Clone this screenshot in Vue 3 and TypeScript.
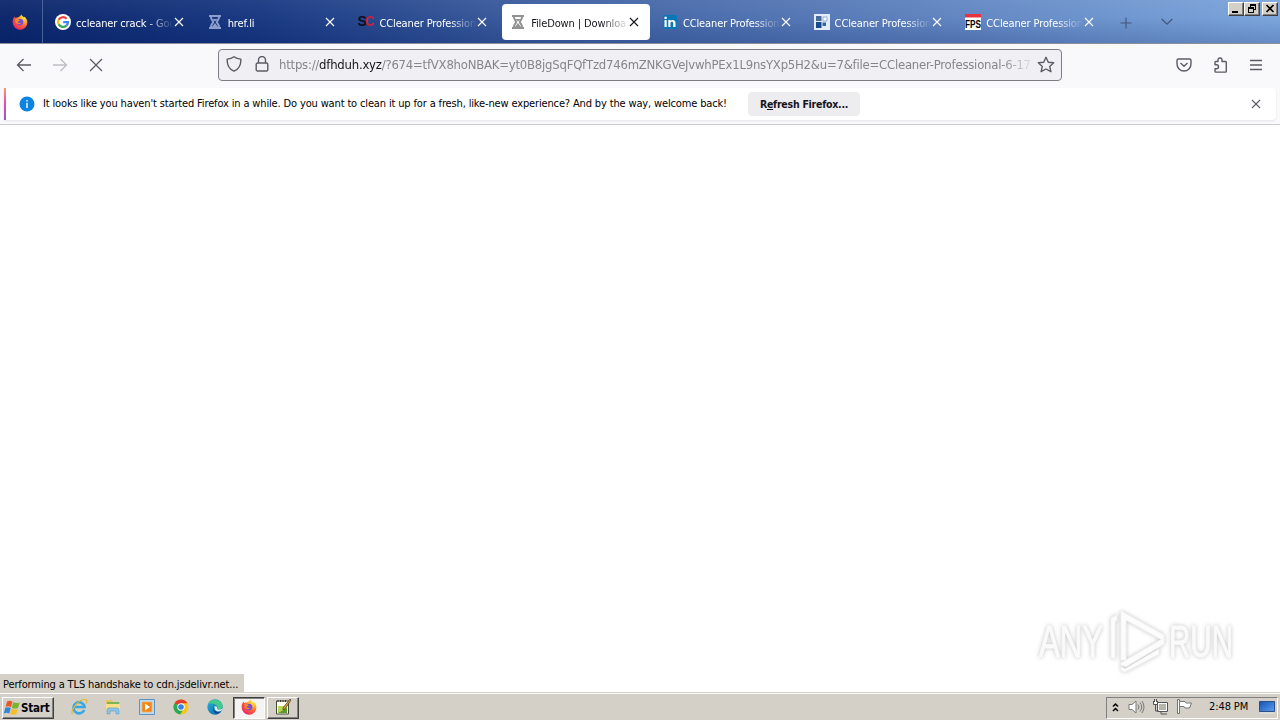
<script setup lang="ts">
interface Tab {
  title: string
  icon: 'google' | 'hourglass' | 'sc' | 'linkedin' | 'blocks' | 'fps'
  active?: boolean
}

const tabs: Tab[] = [
  { title: 'ccleaner crack - Goo', icon: 'google' },
  { title: 'href.li', icon: 'hourglass' },
  { title: 'CCleaner Profession', icon: 'sc' },
  { title: 'FileDown | Downloa', icon: 'hourglass', active: true },
  { title: 'CCleaner Profession', icon: 'linkedin' },
  { title: 'CCleaner Profession', icon: 'blocks' },
  { title: 'CCleaner Profession', icon: 'fps' },
]
</script>

<template>
  <svg class="defs" width="0" height="0" aria-hidden="true">
    <defs>
      <radialGradient id="foxFlame" cx="0.8" cy="0.15" r="0.95">
        <stop offset="0" stop-color="#fff04a" />
        <stop offset="0.35" stop-color="#ffb02b" />
        <stop offset="0.65" stop-color="#ff5a36" />
        <stop offset="1" stop-color="#e8286a" />
      </radialGradient>
      <linearGradient id="edgeBlue" x1="0" y1="0" x2="1" y2="1">
        <stop offset="0" stop-color="#2bb8d8" />
        <stop offset="1" stop-color="#0b57a8" />
      </linearGradient>
      <linearGradient id="screenBlue" x1="0" y1="0" x2="1" y2="1">
        <stop offset="0" stop-color="#1553b4" />
        <stop offset="1" stop-color="#5d9df0" />
      </linearGradient>
      <symbol id="firefox" viewBox="0 0 16 16">
        <path d="M1.200 4.800 2.600 2.600 3.400 4 5 3.500C7 3.200 8.300 2.500 9.300.3c.4 1.500 1.600 2 2.500 3l.6-.6c1.800 1.300 3 3.300 3 5.600a7.300 7.300 0 0 1-14.700.3c0-1.400 0-2.500.5-3.800z" fill="url(#foxFlame)" />
        <path d="M5 6.300c1-.4 1.800-1.400 3-1.600 2.300.2 3.500 1.600 3.400 3.600-.1 2-1.500 3.200-3.200 3.200C6.300 11.500 5 10.400 4.900 8.700z" fill="#7a4bd8" />
        <path d="M3.500 5.200c1.600-.6 2.600.2 4.300 1-.6 1-1.800.8-2.300 1.800.8 1.300 2.500 1.200 3.600.9-1 1.500-3.800 1.500-5-.2-.8-1.100-.9-2.200-.6-3.500z" fill="#ff8b2b" />
      </symbol>
      <symbol id="cross" viewBox="0 0 10 10">
        <path d="M1 1l8 8M9 1L1 9" fill="none" stroke="currentColor" stroke-width="1.100" />
      </symbol>
    </defs>
  </svg>

  <div class="screen">
    <header class="tabbar">
      <div class="pin"><svg width="16" height="16"><use href="#firefox" /></svg></div>
      <div class="tabs">
        <div v-for="(tab, i) in tabs" :key="i" class="tab" :class="{ active: tab.active }">
          <svg class="fav" width="16" height="16" viewBox="0 0 16 16">
            <g v-if="tab.icon === 'google'">
              <circle cx="8" cy="8" r="8" fill="#fff" />
              <g fill="none" stroke-width="2.200">
                <path d="M11.600 4.700A5 5 0 0 0 3.600 5.800" stroke="#ea4335" />
                <path d="M3.600 5.800a5 5 0 0 0 0 4.500" stroke="#fbbc05" />
                <path d="M3.600 10.300a5 5 0 0 0 7.800 1.300" stroke="#34a853" />
                <path d="M11.400 11.600A5 5 0 0 0 13 8.100H8.200" stroke="#4285f4" />
              </g>
            </g>
            <g v-else-if="tab.icon === 'hourglass'" class="glass" fill="none" stroke="currentColor">
              <path d="M2 2h12M2 14h12" stroke-width="2.200" />
              <path d="M4 3c0 3 2.200 3.800 2.200 5S4 10 4 13M12 3c0 3-2.200 3.800-2.200 5S12 10 12 13" stroke-width="2" />
              <path d="M5.500 5h5L8 7.500zM8 9l3 4H5z" fill="currentColor" stroke="none" />
            </g>
            <g v-else-if="tab.icon === 'sc'" class="sc">
              <text x="-0.500" y="12" fill="#0b0d20">S</text>
              <text x="7" y="12" textLength="9" lengthAdjust="spacingAndGlyphs" fill="#c3223c">C</text>
            </g>
            <g v-else-if="tab.icon === 'linkedin'">
              <rect x="1" y="1" width="14" height="14" rx="1" fill="#0a78b8" />
              <path d="M2.500 6h2.200v7H2.500zM2.500 2.800h2.200v2.200H2.500zM6.300 6h2.200v1c1-1.600 5-1.600 5 1.700V13h-2.300V9c0-1.800-2.700-1.800-2.700 0v4H6.300z" fill="#fff" />
            </g>
            <g v-else-if="tab.icon === 'blocks'">
              <path d="M0 0h16v16H0z" fill="#e3edf9" />
              <path d="M2 2h5.500v5H2z" fill="#4a6a9a" />
              <path d="M2 8h5.500v6H2z" fill="#174a91" />
              <path d="M8.500 8.500H12V12H8.500z" fill="#2c66b0" />
              <path d="M9 3h4v4H9z" fill="#fff" stroke="#8fadd6" />
            </g>
            <g v-else class="fps">
              <path d="M0 0h16v16H0z" fill="#fff" />
              <path d="M0 0h16v3.500H0z" fill="#e5343f" />
              <text x="0" y="13.500" textLength="16" lengthAdjust="spacingAndGlyphs">FPS</text>
            </g>
          </svg>
          <span class="title">{{ tab.title }}</span>
          <svg class="close" width="10" height="10"><use href="#cross" /></svg>
        </div>
      </div>
      <svg class="plus" width="12" height="12"><path d="M6 .5v11M.5 6h11" stroke="#43597f" stroke-width="1.200" /></svg>
      <svg class="chev" width="12" height="8"><path d="M.7 1 6 6.200 11.300 1" fill="none" stroke="#43597f" stroke-width="1.300" /></svg>
      <div class="wincontrols">
        <span class="wb"><svg width="14" height="12"><path d="M3 8h6v2H3z" /></svg></span>
        <span class="wb"><svg width="14" height="12"><path d="M5 1h6v6H9V6h1V3H6v1H5zM3 4h6v6H3zM4 6v3h4V6z" fill-rule="evenodd" /></svg></span>
        <span class="wb last"><svg width="14" height="12"><path d="M3.500 2l7 7M10.500 2l-7 7" stroke="#000" stroke-width="1.700" /></svg></span>
      </div>
    </header>

    <nav class="navbar">
      <svg class="nav back" width="16" height="16"><path d="M15 8H1.500M7.500 2l-6 6 6 6" /></svg>
      <svg class="nav fwd" width="16" height="16"><path d="M1 8h13.500M8.500 2l6 6-6 6" /></svg>
      <svg class="nav stop" width="14" height="14"><path d="M1 1l12 12M13 1 1 13" /></svg>
      <div class="urlbar">
        <svg class="ui shield" width="16" height="16"><path d="M8 .8c2 1.500 4.300 2.100 6.800 2.300.3 5.500-1.600 9.900-6.800 12.100C2.800 13 .9 8.600 1.200 3.100 3.700 2.900 6 2.300 8 .8z" /></svg>
        <svg class="ui lock" width="14" height="16"><path d="M3.500 7V4a3.500 3.500 0 0 1 7 0v3M2.500 7h9a1.300 1.300 0 0 1 1.300 1.300v5.400a1.300 1.300 0 0 1-1.300 1.300h-9a1.300 1.300 0 0 1-1.300-1.300V8.300A1.300 1.300 0 0 1 2.500 7z" /></svg>
        <div class="url">https://<b>dfhduh.xyz</b>/?674=tfVX8hoNBAK=yt0B8jgSqFQfTzd746mZNKGVeJvwhPEx1L9nsYXp5H2&amp;u=7&amp;file=CCleaner-Professional-6-17</div>
        <svg class="ui star" width="18" height="17"><path d="M9 1.300l2.300 4.900 5.400.6-4 3.600 1.200 5.300L9 13l-4.900 2.700 1.200-5.300-4-3.600 5.400-.6z" /></svg>
      </div>
      <div class="actions">
        <svg class="ui" width="16" height="16"><path d="M2.500 2h11A1.500 1.500 0 0 1 15 3.500V7A7 7 0 0 1 1 7V3.500A1.500 1.500 0 0 1 2.500 2zM4.500 6 8 9.300 11.500 6" /></svg>
        <svg class="ui" width="16" height="16"><path d="M5 4.500V3a2 2 0 0 1 4 0v1.500h3.500a.8.8 0 0 1 .8.8v9a.8.8 0 0 1-.8.8H2.800a.8.8 0 0 1-.8-.8V11.800H3.500a2 2 0 0 0 0-4H2V5.300a.8.8 0 0 1 .8-.8z" /></svg>
        <svg class="ui" width="14" height="16"><path d="M1 3.500h12M1 8h12M1 12.500h12" /></svg>
      </div>
    </nav>

    <div class="notice-wrap">
      <div class="notice">
        <svg class="info" width="16" height="16"><circle cx="8" cy="8" r="7.500" fill="#0a84e0" /><path d="M7.300 4h1.400v1.400H7.300zM7.300 6.700h1.400V12H7.300z" fill="#fff" /></svg>
        <span class="msg">It looks like you haven't started Firefox in a while. Do you want to clean it up for a fresh, like-new experience? And by the way, welcome back!</span>
        <button class="refresh">R<u>e</u>fresh Firefox...</button>
        <svg class="dismiss" width="10" height="10"><use href="#cross" /></svg>
      </div>
    </div>

    <main class="page">
      <div class="status"><span>Performing a TLS handshake to cdn.jsdelivr.net...</span></div>
      <svg class="brand" width="216" height="76" viewBox="0 0 216 76">
        <g class="brandtext">
          <text x="9" y="53" textLength="64" lengthAdjust="spacingAndGlyphs">ANY</text>
          <text x="139" y="53" textLength="64" lengthAdjust="spacingAndGlyphs">RUN</text>
        </g>
        <g class="mark">
          <path d="M81 53V14l6-3v5l-2 1.500V55z" />
          <path d="M91 7 134 31v6L96 16v40h-5z" />
          <path d="M91 59 134 34v6L96 62.500 91 61zM91 63l4 2 34-20v5L95 68l-4-2z" />
        </g>
      </svg>
    </main>

    <footer class="taskbar">
      <div class="start">
        <svg width="18" height="16" viewBox="0 0 18 16">
          <path d="M4 1.500c2-1.200 4-.8 5.500.2L8 7.200C6.400 6.200 4.500 6 2.600 7z" fill="#e8582b" />
          <path d="M10.300 2.200c2 1 3.900 1 6.400.2L15 8c-2 .9-4 .7-6.200-.3z" fill="#79b530" />
          <path d="M2.300 7.800c2-1 3.800-.8 5.400.2L6.300 13.500C4.500 12.500 2.800 12.500.8 13.400z" fill="#2d86d6" />
          <path d="M8.500 8.600c2 1 4.200 1.200 6.200.3l-1.400 5.300c-2 .9-4.200.8-6.200-.2z" fill="#f6bd27" />
        </svg>
        <span>Start</span>
      </div>
      <div class="quick">
        <svg width="18" height="18" viewBox="0 0 18 18">
          <path d="M14.200 12A5.600 5.600 0 1 1 14.600 9H4" fill="none" stroke="#38a8e3" stroke-width="2.600" />
          <path d="M2.500 16C-.5 13 10-1 16.500 2c1 .8.500 2-.5 3.500" fill="none" stroke="#e7b52b" stroke-width="1.200" />
        </svg>
        <svg width="18" height="18" viewBox="0 0 18 18">
          <path d="M2 2h6l1 2h7v9H2z" fill="#e8c562" />
          <path d="M3 4h12v3H3z" fill="#78b756" /><path d="M2 6h14v7H2z" fill="#f8df8b" />
          <path d="M3 16v-4c0-1.500 1-2 2-2h8c1 0 2 .5 2 2v4h-3v-3H6v3z" fill="#8bc5e9" stroke="#5b9dc8" stroke-width=".6" />
        </svg>
        <svg width="18" height="18" viewBox="0 0 18 18">
          <path d="M1.500 1.500h15v15h-15z" fill="#b9dcf4" stroke="#5a94c3" />
          <path d="M4 4h10v10H4z" fill="#ef8618" stroke="#f7b35f" stroke-width=".8" /><path d="M7 5.500 12 9l-5 3.500z" fill="#fff" />
        </svg>
        <svg width="18" height="18" viewBox="0 0 18 18">
          <circle cx="9" cy="9" r="7.500" fill="#fbc516" />
          <path d="M9 9 2.500 5.200A7.500 7.500 0 0 1 15.500 5.300H9z" fill="#e33b2e" />
          <path d="M9 9 2.500 5.200A7.500 7.500 0 0 0 8.300 16.500L11.500 11z" fill="#2da94f" />
          <circle cx="9" cy="9" r="3.700" fill="#fff" /><circle cx="9" cy="9" r="2.800" fill="#3b7de9" />
        </svg>
        <svg width="18" height="18" viewBox="0 0 18 18">
          <circle cx="9" cy="9" r="7.700" fill="url(#edgeBlue)" />
          <path d="M2 6c2-6 14-6 14.700 2.500 0 3-3.700 3.500-5.200 2.500 1-4-4-6.500-9.500-5z" fill="#42c98b" />
          <path d="M8 8c-2 4 2 7 7 5-1 1-2 2-3.500 2.800C7 15 6 10.500 8 8z" fill="#084b93" />
          <path d="M8.500 8.500c1.800-1 3.200.5 2.800 2.500 1.200 1 4 .8 5.300-1-.3 1.800-.8 2.500-1.600 3-3.500 1.500-7-.5-6.500-4.500z" fill="#d9eef2" />
        </svg>
      </div>
      <div class="task pressed"><svg width="16" height="16"><use href="#firefox" /></svg></div>
      <div class="task">
        <svg width="18" height="18" viewBox="0 0 18 18">
          <path d="M2.500 3h12v13h-12z" fill="#fffef0" stroke="#454b3b" />
          <path d="M4 2v2M6.500 2v2M9 2v2M11.500 2v2" stroke="#333" />
          <path d="M4 8h9v7H4z" fill="#b4d94f" /><path d="M4 15l9-5v5z" fill="#5e9831" />
          <path d="M9 10l7-9 1 1-6 9-2 .7z" fill="#e0a33b" stroke="#3c3020" stroke-width=".7" />
        </svg>
      </div>
      <div class="tray">
        <svg width="7" height="11"><path d="M1 4.500 3.500 2 6 4.500M1 9l2.500-2.500L6 9" fill="none" stroke="#000" stroke-width="1.500" /></svg>
        <svg class="vol" width="17" height="16"><path d="M1 5.500h3L8 2v12l-4-3.500H1z" fill="#fff" stroke="#777" /><path d="M10 5.500q2 2.500 0 5M12 3.500q3.500 4.500 0 9M14 2q4 6 0 12" fill="none" stroke="#777" /></svg>
        <svg class="net" width="17" height="16"><path d="M5.500 3.500h10v9h-10z" fill="#fff" stroke="#555" /><path d="M7 5h7v6H7z" fill="#b8b4ac" /><path d="M1.500 2h4v3.500h-4z" fill="#fff" /><path d="M9 13v2h6M1.500 2v3.500h4V2M3.500 5.500V12H7M2.500 0v3M4.500 0v3" fill="none" stroke="#555" /></svg>
        <svg class="flag" width="17" height="16"><path d="M1.500.5h2v14h-2z" fill="#fff" stroke="#666" stroke-width=".9" /><path d="M3.500 2.500H9l1 1.500h5.500l-2 5H9L8 7.500H3.500z" fill="#fff" stroke="#777" /></svg>
        <span class="clock">2:48 PM</span>
        <svg class="desk" width="16" height="13"><path d="M.5.500h15v10H.5z" fill="url(#screenBlue)" stroke="#2c4f87" /><path d="M1 11.500h14v1H1z" fill="#dfe6ef" /></svg>
      </div>
    </footer>
  </div>
</template>

<style>
html, body { margin: 0; overflow: hidden; background: #fff; }
</style>

<style scoped>
.defs { position: absolute; }
.screen { width: 1280px; height: 720px; display: flex; flex-direction: column; overflow: hidden; background: #fff; color: #000; font: 11px/14px "DejaVu Sans Condensed", "DejaVu Sans", sans-serif; font-stretch: condensed; }
svg { display: block; flex: none; }

.tabbar { position: relative; flex: none; box-sizing: border-box; height: 44px; display: flex; align-items: center; border-bottom: 1px solid #8d9099; background: linear-gradient(180deg, rgba(255,255,255,.06), rgba(255,255,255,.02) 40%, rgba(0,24,90,.18)), linear-gradient(90deg, #0a246a, #163680 20%, #3b5c9f 42%, #5578b6 65%, #7ba5dc 100%); }
.pin { width: 43px; height: 43px; box-sizing: border-box; padding: 14px 0 0 12px; border-right: 1px solid #49609a; flex: none; }
.tabs { display: flex; margin-left: 2px; width: 1062px; flex: none; }
.tab { flex: 1; min-width: 0; box-sizing: border-box; height: 36px; margin: 1px 2px 0; padding: 0 11px 0 8px; display: flex; align-items: center; color: #fff; border-radius: 4px; }
.tab.active { background: #fff; color: #15141a; }
.fav { margin-right: 5px; }
.glass { color: #8c9dce; }
.active .glass { color: #929292; }
.sc { font: bold 14px "Liberation Sans", sans-serif; }
.fps { font: 900 10px "Liberation Sans", sans-serif; }
.title { flex: 1; min-width: 0; padding-top: 3px; white-space: nowrap; letter-spacing: -.12px; -webkit-mask-image: linear-gradient(90deg, #000 72%, transparent); mask-image: linear-gradient(90deg, #000 72%, transparent); }
.plus { margin: 2px 0 0 13px; }
.chev { margin-left: 29px; }
.wincontrols { position: absolute; right: 2px; top: 2px; display: flex; }
.wb { box-sizing: border-box; width: 16px; height: 14px; background: #d4d0c8; border: 1px solid; border-color: #fff #404040 #404040 #fff; box-shadow: inset -1px -1px #808080; }
.wb.last { margin-left: 2px; }

.navbar { flex: none; height: 44px; display: flex; align-items: center; box-sizing: border-box; padding-bottom: 3px; background: #f9f9fb; }
.nav { fill: none; stroke: #5b5b66; stroke-width: 1.300; }
.back { margin-left: 16px; }
.fwd { margin-left: 20px; stroke: #bdbdc4; }
.stop { margin-left: 21px; }
.urlbar { box-sizing: border-box; width: 844px; height: 32px; margin-left: 115px; border: 1px solid #7c7c83; border-radius: 4px; background: #f0f0f4; display: flex; align-items: center; padding: 0 6px 0 7px; }
.ui { fill: none; stroke: #5b5b66; stroke-width: 1.400; stroke-linejoin: round; }
.urlbar .ui { position: relative; top: -.5px; }
.lock { margin-left: 13px; }
.url { width: 752px; margin: 0 6px 0 10px; flex: none; white-space: nowrap; color: #85858c; font-size: 13px; line-height: 18px; letter-spacing: -.23px; -webkit-mask-image: linear-gradient(90deg, #000 96%, rgba(0,0,0,.15)); mask-image: linear-gradient(90deg, #000 96%, rgba(0,0,0,.15)); }
.url b { font-weight: normal; color: #15141a; }
.actions { margin-left: 114px; display: flex; gap: 20px; }
.actions svg:first-child { margin-right: 1px; }

.notice-wrap { flex: none; box-sizing: border-box; height: 37px; padding: 0 4px; background: #f9f9fb; border-bottom: 1px solid #ccccd0; }
.notice { position: relative; box-sizing: border-box; height: 32px; display: flex; align-items: center; padding-left: 15px; background: #fff; border-radius: 0 4px 4px 0; box-shadow: 0 1px 2px #e5e5e8; }
.notice::before { content: ""; position: absolute; left: 0; top: 0; width: 2px; height: 32px; background: linear-gradient(#ff9a70, #e64fa4 45%, #9059c8); }
.msg { margin-left: 8px; width: 685px; white-space: nowrap; letter-spacing: -.146px; }
.refresh { width: 112px; height: 24px; margin-left: 20px; padding: 0; border: 0; border-radius: 4px; background: #ededf0; color: #15141a; font: bold 10.500px "DejaVu Sans Condensed", "DejaVu Sans", sans-serif; font-stretch: condensed; letter-spacing: -.25px; }
.dismiss { margin-left: auto; margin-right: 15px; color: #5b5b66; }

.page { position: relative; flex: 1; background: #fff; }
.status { position: absolute; left: 0; bottom: 0; width: 244px; height: 18px; box-sizing: border-box; padding: 4px 3px 0; background: #d4d0c8; white-space: nowrap; letter-spacing: -.14px; }
.brand { position: absolute; left: 1030px; top: 479px; filter: drop-shadow(0 0 2px rgba(0,0,0,.24)); }
.brandtext { font: 44px "Liberation Sans", sans-serif; fill: #fafafa; stroke: #fafafa; stroke-width: 1; }
.mark { fill: #fcfcfc; stroke: #f4f4f4; stroke-width: 1; }

.taskbar { flex: none; box-sizing: border-box; height: 28px; display: flex; align-items: center; padding: 2px 2px 0; background: #d4d0c8; border-top: 1px solid #d4d0c8; box-shadow: inset 0 1px #fff; }
.start { box-sizing: border-box; width: 52px; height: 22px; display: flex; align-items: center; border: 1px solid; border-color: #fff #404040 #404040 #fff; box-shadow: inset -1px -1px #808080; font-weight: bold; font-size: 11.500px; letter-spacing: -.2px; }
.quick { display: flex; gap: 16px; margin: -2px 0 0 16px; }
.task { box-sizing: border-box; width: 32px; height: 22px; display: flex; align-items: center; justify-content: center; border: 1px solid; border-color: #fff #404040 #404040 #fff; box-shadow: inset -1px -1px #808080; margin-left: 2px; padding-bottom: 1px; }
.task.pressed { margin-left: 9px; background: #f5f4f2; border-color: #404040 #fff #fff #404040; box-shadow: inset 1px 1px #808080; }
.tray { box-sizing: border-box; width: 172px; height: 22px; margin-left: auto; padding: 0 0 1px 5px; display: flex; align-items: center; border: 1px solid; border-color: #808080 #fff #fff #808080; white-space: nowrap; }
.vol { margin-left: 9px; }
.net, .flag { margin-left: 7px; }
.clock { width: 41px; margin-left: 16px; letter-spacing: -.1px; }
.desk { margin-left: 9px; }
</style>
